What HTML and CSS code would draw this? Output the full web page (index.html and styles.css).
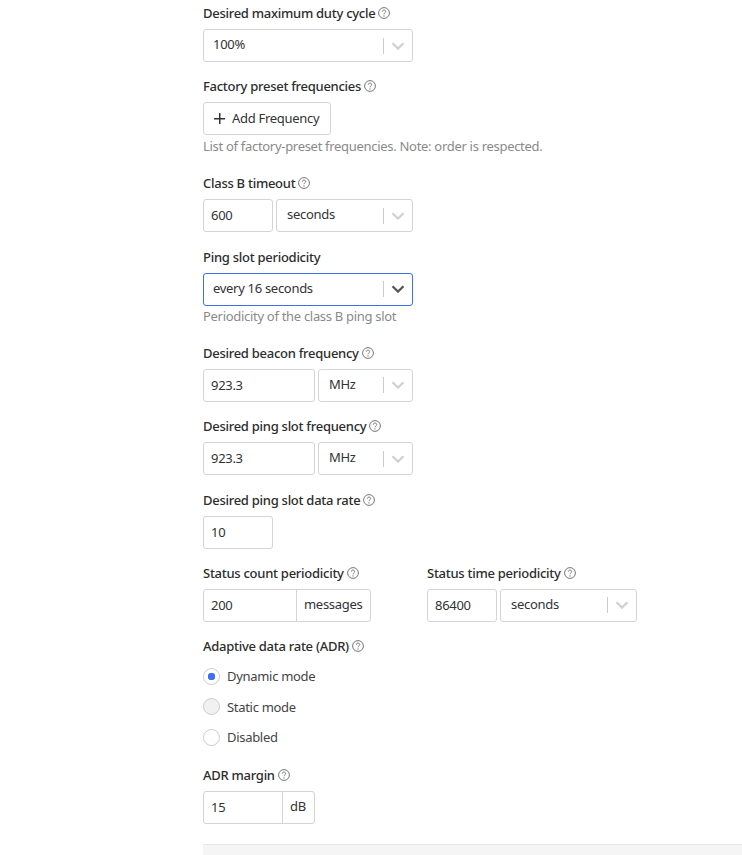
FILE: index.html
```html
<!DOCTYPE html>
<html lang="en">
<head>
<meta charset="utf-8">
<title>Form</title>
<link rel="stylesheet" href="styles.css">
<svg class="defs" width="0" height="0" aria-hidden="true">
  <symbol id="help" viewBox="0 0 12 12">
    <circle cx="6" cy="6" r="5.4" fill="none" stroke="currentColor" stroke-width="1"/>
    <path d="M4.3 4.7c0-1 .8-1.6 1.7-1.6s1.7.6 1.7 1.5c0 1.3-1.7 1.3-1.7 2.7" fill="none" stroke="currentColor" stroke-width="1"/>
    <circle cx="6" cy="8.9" r=".65" fill="currentColor"/>
  </symbol>
  <symbol id="chev" viewBox="0 0 14 8">
    <path d="M1.5 1.2 7 6.6l5.5-5.4" fill="none" stroke="currentColor" stroke-width="2.2"/>
  </symbol>
</svg>
</head>
<body>
<main class="form">
  <div class="field">
    <div class="label">Desired maximum duty cycle<svg class="help"><use href="#help"/></svg></div>
    <div class="select w210"><span class="value">100%</span><span class="sep"></span><svg class="chev"><use href="#chev"/></svg></div>
  </div>
  <div class="field with-desc">
    <div class="label">Factory preset frequencies<svg class="help"><use href="#help"/></svg></div>
    <button class="btn" type="button"><span class="plus"></span><span class="btn-text">Add Frequency</span></button>
    <div class="desc">List of factory-preset frequencies. Note: order is respected.</div>
  </div>
  <div class="field">
    <div class="label">Class B timeout<svg class="help"><use href="#help"/></svg></div>
    <div class="group w210">
      <div class="input w70"><span class="value">600</span></div>
      <div class="select grow"><span class="value">seconds</span><span class="sep"></span><svg class="chev"><use href="#chev"/></svg></div>
    </div>
  </div>
  <div class="field with-desc tight">
    <div class="label">Ping slot periodicity</div>
    <div class="select w210 focused"><span class="value">every 16 seconds</span><span class="sep"></span><svg class="chev"><use href="#chev"/></svg></div>
    <div class="desc">Periodicity of the class B ping slot</div>
  </div>
  <div class="field">
    <div class="label">Desired beacon frequency<svg class="help"><use href="#help"/></svg></div>
    <div class="group w210">
      <div class="input w112"><span class="value">923.3</span></div>
      <div class="select grow"><span class="value">MHz</span><span class="sep"></span><svg class="chev"><use href="#chev"/></svg></div>
    </div>
  </div>
  <div class="field">
    <div class="label">Desired ping slot frequency<svg class="help"><use href="#help"/></svg></div>
    <div class="group w210">
      <div class="input w112"><span class="value">923.3</span></div>
      <div class="select grow"><span class="value">MHz</span><span class="sep"></span><svg class="chev"><use href="#chev"/></svg></div>
    </div>
  </div>
  <div class="field">
    <div class="label">Desired ping slot data rate<svg class="help"><use href="#help"/></svg></div>
    <div class="input w70"><span class="value">10</span></div>
  </div>
  <div class="field columns">
    <div>
      <div class="label">Status count periodicity<svg class="help"><use href="#help"/></svg></div>
      <div class="addon-group w168"><div class="input joined"><span class="value">200</span></div><div class="addon wide"><span class="value">messages</span></div></div>
    </div>
    <div>
      <div class="label">Status time periodicity<svg class="help"><use href="#help"/></svg></div>
      <div class="group w210">
        <div class="input w70"><span class="value">86400</span></div>
        <div class="select grow"><span class="value">seconds</span><span class="sep"></span><svg class="chev"><use href="#chev"/></svg></div>
      </div>
    </div>
  </div>
  <div class="field radios-field">
    <div class="label">Adaptive data rate (ADR)<svg class="help"><use href="#help"/></svg></div>
    <div class="radios">
      <div class="radio-row"><span class="radio checked"></span>Dynamic mode</div>
      <div class="radio-row"><span class="radio hover"></span>Static mode</div>
      <div class="radio-row"><span class="radio"></span>Disabled</div>
    </div>
  </div>
  <div class="field">
    <div class="label">ADR margin<svg class="help"><use href="#help"/></svg></div>
    <div class="addon-group w112"><div class="input joined"><span class="value">15</span></div><div class="addon narrow"><span class="value">dB</span></div></div>
  </div>
  <div class="footer-bar"></div>
</main>
</body>
</html>
```
FILE: styles.css
```css
html, body {
  margin: 0;
  height: 855px;
  overflow: hidden;
  background: #fff;
}
.defs { position: absolute; }
body {
  font-family: "Noto Sans", "Open Sans", sans-serif;
  font-size: 13px;
  color: #333;
  letter-spacing: -0.3px;
}
.form {
  padding: 3px 0 0 203px;
}
.field {
  margin-bottom: 14.4px;
}
.with-desc {
  margin-bottom: 17.4px;
}
.with-desc.tight {
  margin-bottom: 16.4px;
}
.radios-field {
  margin-bottom: 12.6px;
}
.label {
  display: flex;
  align-items: center;
  height: 20px;
  margin-bottom: 6px;
  font-weight: 500;
  color: #2d2d2d;
  letter-spacing: -0.27px;
}
.help {
  width: 12px;
  height: 12px;
  margin-left: 3px;
  color: #777;
}
.w210 { width: 210px; }
.w168 { width: 168px; }
.w112 { width: 112px; }
.w70 { width: 70px; }
.group {
  display: flex;
  gap: 3px;
}
.select, .input, .addon-group, .btn {
  box-sizing: border-box;
  height: 33px;
  border: 1px solid #d4d4d4;
  border-radius: 3px;
  background: #fff;
}
.input {
  display: flex;
  align-items: center;
  flex: none;
  padding: 0 0 1px 7px;
}
.select {
  display: flex;
  align-items: center;
  padding: 0 0 3px 9px;
}
.select.grow {
  padding-left: 10px;
}
.grow {
  flex: 1;
  min-width: 0;
}
.value { flex: 1; }
.sep {
  width: 1px;
  height: 16px;
  margin-top: 3px;
  background: #ccc;
}
.chev {
  width: 14px;
  height: 8px;
  margin: 3px 7px 0 7px;
  color: #d0d0d0;
}
.focused {
  border-color: #3a6ff0;
}
.focused .chev { color: #555; }
.btn {
  display: flex;
  align-items: center;
  width: 128px;
  padding: 0 0 1px 10px;
  font: inherit;
  color: #333;
  letter-spacing: inherit;
}
.plus {
  width: 11px;
  height: 11px;
  margin-right: 7px;
  background:
    linear-gradient(#333, #333) center / 11px 1.5px no-repeat,
    linear-gradient(#333, #333) center / 1.5px 11px no-repeat;
}
.desc {
  height: 20px;
  margin-top: 0.6px;
  line-height: 20px;
  color: #8a8a8a;
}
.columns {
  display: flex;
  gap: 14px;
}
.columns > div { width: 210px; }
.addon-group {
  display: flex;
}
.joined {
  flex: 1;
  border: 0;
  height: 31px;
  min-width: 0;
  background: transparent;
}
.addon {
  display: flex;
  box-sizing: border-box;
  align-items: center;
  flex: none;
  padding: 0 0 3px 7px;
  border-left: 1px solid #d4d4d4;
}
.wide { width: 74px; }
.narrow { width: 32px; }
.radios {
  margin-top: -1.5px;
}
.radio-row {
  display: flex;
  align-items: center;
  gap: 7px;
  height: 30.5px;
  color: #444;
}
.radio {
  box-sizing: border-box;
  width: 17px;
  height: 17px;
  border: 1px solid #ccc;
  border-radius: 50%;
  background: #fff;
}
.radio.hover { background: #f1f1f1; }
.radio.checked {
  background: radial-gradient(circle, #3f6ff2 0 3.5px, #fff 4px);
}
.footer-bar {
  box-sizing: border-box;
  height: 11px;
  margin-top: 20px;
  border-top: 1px solid #e6e6e6;
  background: #f5f5f5;
}
```
